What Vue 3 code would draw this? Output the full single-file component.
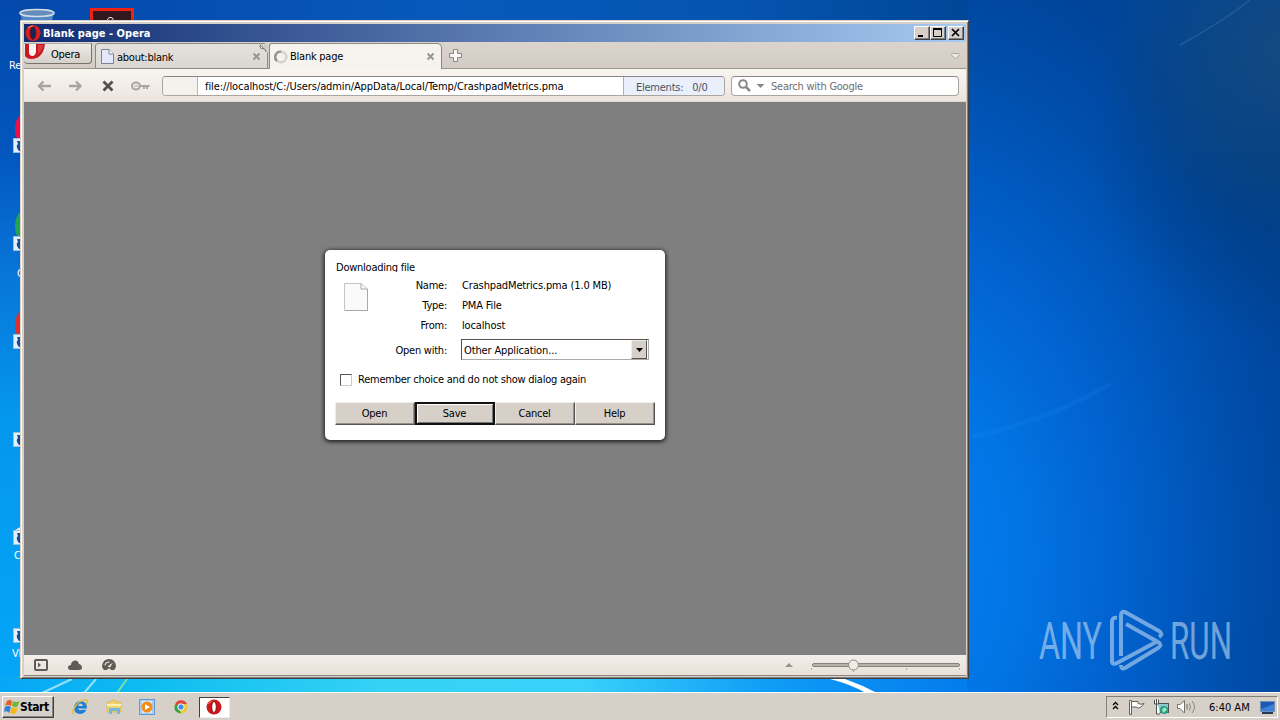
<template>
  <div class="desktop">
    <svg class="wallpaper" width="1280" height="720" viewBox="0 0 1280 720">
      <defs>
        <linearGradient id="sky" x1="0" y1="0" x2="0" y2="1">
          <stop offset="0" stop-color="#0349ab" />
          <stop offset=".2" stop-color="#0355bd" />
          <stop offset=".4" stop-color="#0779dc" />
          <stop offset=".58" stop-color="#0497ee" />
          <stop offset="1" stop-color="#04a8fa" />
        </linearGradient>
        <linearGradient id="strip" x1="0" y1="0" x2="1" y2="0">
          <stop offset="0" stop-color="#08a6f6" />
          <stop offset=".12" stop-color="#0fbdf0" />
          <stop offset=".3" stop-color="#35d2f4" />
          <stop offset=".45" stop-color="#3ad2fa" />
          <stop offset=".6" stop-color="#0f9df6" />
          <stop offset=".75" stop-color="#037cec" />
        </linearGradient>
        <radialGradient id="right" gradientUnits="userSpaceOnUse" cx="900" cy="560" r="620" gradientTransform="translate(900 560) scale(.68 1) translate(-900 -560)">
          <stop offset="0" stop-color="#037fee" />
          <stop offset=".28" stop-color="#0275e5" />
          <stop offset=".55" stop-color="#0160cc" />
          <stop offset=".8" stop-color="#004fad" />
          <stop offset="1" stop-color="#00449a" />
        </radialGradient>
        <radialGradient id="corner" gradientUnits="userSpaceOnUse" cx="1290" cy="50" r="190">
          <stop offset="0" stop-color="#134a80" />
          <stop offset="1" stop-color="#134a80" stop-opacity="0" />
        </radialGradient>
        <radialGradient id="shade" gradientUnits="userSpaceOnUse" cx="1290" cy="145" r="200">
          <stop offset="0" stop-color="#003c80" />
          <stop offset="1" stop-color="#003c80" stop-opacity="0" />
        </radialGradient>
        <linearGradient id="top" x1="0" y1="0" x2="1" y2="0">
          <stop offset="0" stop-color="#0448aa" />
          <stop offset=".45" stop-color="#0759bb" />
          <stop offset=".75" stop-color="#0554b0" />
          <stop offset="1" stop-color="#004797" />
        </linearGradient>
      </defs>
      <rect width="40" height="720" fill="url(#sky)" />
      <rect x="20" width="949" height="24" fill="url(#top)" />
      <rect y="676" width="1280" height="20" fill="url(#strip)" />
      <rect x="967" width="313" height="693" fill="url(#right)" />
      <rect x="967" width="313" height="693" fill="url(#shade)" />
      <rect x="967" width="313" height="400" fill="url(#corner)" />
      <path d="M1180 45Q1225 20 1250 0" stroke="#4b83b8" stroke-width="1.5" opacity=".35" fill="none" />
      <path d="M972 437Q1050 420 1110 384" stroke="#2d9cf6" stroke-width="5" opacity=".12" fill="none" />
      <path d="M42 693L72 679M84 693L96 679" stroke="#b9ecfb" stroke-width="2" opacity=".8" />
      <path d="M117 693L127 679" stroke="#7de0a0" stroke-width="2" />
      <path d="M830 679H845Q862 685 877 693H866Q850 684 830 679Z" fill="#fff" />

      <!-- recycle bin and reader shortcut behind the window -->
      <path d="M20 12L24 30H50L54 12Z" fill="#5288c8" />
      <ellipse cx="37" cy="13" rx="17" ry="3.5" fill="#648dbd" stroke="#d4dce4" stroke-width="1.6" />
      <rect x="91.500" y="9.500" width="41" height="20" fill="#32181c" stroke="#ef2314" stroke-width="3" />
      <path d="M108 24Q106 17 111 17.500Q115 18 111 24" stroke="#eee" fill="none" />
      <ellipse cx="27" cy="129" rx="12" ry="17" fill="#ef0d4b" />
      <ellipse cx="27" cy="226" rx="12" ry="17" fill="#24a451" />
      <ellipse cx="27" cy="325" rx="12" ry="17" fill="#dd3131" />
      <path d="M15 530L22 526V531Z" fill="#e6f0e4" />
      <g v-for="y in shortcutArrows" :key="y" :transform="`translate(13 ${y})`">
        <rect x=".5" y=".5" width="14" height="14" fill="#e3effa" stroke="#9abede" />
        <path d="M6 13Q2 8 5 6L4 3H12V9L9 7Q7 9 9 13Z" fill="#174b91" />
      </g>
      <g class="label">
        <text x="9" y="69">Re</text>
        <text x="17" y="277">G</text>
        <text x="14" y="559">C</text>
        <text x="12" y="657">VL</text>
      </g>

      <g class="brand" opacity=".55">
        <text x="1039" y="659" textLength="63" lengthAdjust="spacingAndGlyphs">ANY</text>
        <text x="1170" y="659" textLength="62" lengthAdjust="spacingAndGlyphs">RUN</text>
        <g fill="none" stroke="#cfe4f7" stroke-width="4" stroke-linejoin="round">
          <path d="M1117 618Q1112 617 1112 622V662Q1113 665 1117 663L1158 641" />
          <path d="M1159 637Q1164 634 1159 631L1125 612Q1121 611 1121 616V656" />
          <path d="M1126 624L1158 642Q1163 645 1158 648L1125 668Q1121 670 1121 665" />
        </g>
      </g>
    </svg>

    <main class="window">
      <header class="titlebar">
        <svg class="logo" width="16" height="16" viewBox="0 0 16 16">
          <ellipse cx="8" cy="8" rx="7.500" ry="8" fill="#d9201e" />
          <ellipse cx="8" cy="8" rx="3" ry="6.500" fill="#142659" stroke="#8c1010" />
          <path d="M3 3Q5 1 8 1" stroke="#ff9484" fill="none" />
        </svg>
        <strong>Blank page - Opera</strong>
        <div class="controls">
          <i><svg width="14" height="12"><path d="M3 9H8" stroke="#000" stroke-width="2" /></svg></i>
          <i><svg width="14" height="12"><path d="M2.500 2V9.500H10.500V2M2 2H11" fill="none" stroke="#000" /><path d="M2 2H11" stroke="#000" stroke-width="2" /></svg></i>
          <i class="close"><svg width="14" height="12"><path d="M3 2L10 9M10 2L3 9" stroke="#000" stroke-width="1.700" /></svg></i>
        </div>
      </header>

      <nav class="tabbar">
        <div class="menu">
          <svg width="21" height="16" viewBox="0 0 21 16">
            <path d="M1 0H21Q19 15 7 15Q3 15 1 12Z" fill="#c91820" />
            <path d="M5 0H12V8Q11 12 8.500 12Q5 12 5 8Z" fill="#f8f4f1" />
            <path d="M14 1H19Q18 7 14 10Z" fill="#e2565a" opacity=".6" />
          </svg>
          <span>Opera</span>
        </div>
        <div class="tab first">
          <svg width="13" height="15" viewBox="0 0 13 15">
            <path d="M.5.500H8L12.500 5V14.500H.500Z" fill="#e3e9f8" stroke="#7b8294" />
            <path d="M8 .5V5H12.500" fill="#fff" stroke="#7b8294" />
          </svg>
          <span>about:blank</span>
          <svg class="x" width="9" height="9"><path d="M1.500 1.500L7.500 7.500M7.500 1.500L1.500 7.500" stroke="#999691" stroke-width="2" /></svg>
          <svg class="fold" width="9" height="9"><path d="M0 0H9V9Z" fill="#d4cdc4" /><path d="M1 1Q1 6 4 4.500Q7 5 7 8M1 1L7 7" fill="#fff" stroke="#77746e" /></svg>
        </div>
        <div class="tab active">
          <svg class="spin" width="14" height="14"><circle cx="7" cy="7" r="5.300" fill="none" stroke="#d3d1ce" stroke-width="2.400" /><path d="M3 11A5.300 5.300 0 0 1 7 1.700" fill="none" stroke="#96948f" stroke-width="2.400" /></svg>
          <span>Blank page</span>
          <svg class="x" width="9" height="9"><path d="M1.500 1.500L7.500 7.500M7.500 1.500L1.500 7.500" stroke="#999691" stroke-width="2" /></svg>
        </div>
        <svg class="plus" width="13" height="13"><path d="M4.500.5H8.500V4.500H12.500V8.500H8.500V12.500H4.500V8.500H.500V4.500H4.500Z" fill="#f8f7f5" stroke="#89847e" /></svg>
        <svg class="trash" width="9" height="7"><path d="M.5 1.500Q.5.500 1.500.500H7.500Q9 1 8 2.500L4.500 6L1 2.500Z" fill="#eee9e3" stroke="#aaa49d" /></svg>
      </nav>

      <section class="toolbar">
        <svg class="nav-icons" width="130" height="20" viewBox="0 0 130 20">
          <g fill="none" stroke="#a9a49f" stroke-width="2.400">
            <path d="M9.500 5.500L5 10L9.500 14.500M5.500 10H17" />
            <path d="M42 5.500L46.500 10L42 14.500M46 10H35" />
          </g>
          <path d="M69.500 5.500L78.500 14.500M78.500 5.500L69.500 14.500" stroke="#53504c" stroke-width="2.800" />
          <g fill="none" stroke="#aaa59f" stroke-width="2">
            <ellipse cx="102" cy="10" rx="4" ry="3.400" />
            <path d="M100 10H115" stroke-width="1" />
            <path d="M107 10H115.500M110 11V13M113 11V13" stroke-width="2" />
          </g>
        </svg>
        <div class="address">
          <span class="badge"></span>
          <span class="url">file://localhost/C:/Users/admin/AppData/Local/Temp/CrashpadMetrics.pma</span>
          <span class="elements"><span>Elements:</span><span>0/0</span></span>
        </div>
        <div class="search">
          <svg width="28" height="14"><circle cx="5" cy="5" r="3.800" fill="none" stroke="#8b8986" stroke-width="2" /><path d="M8 8L12 12" stroke="#8b8986" stroke-width="2.500" /><path d="M18.500 5H26.500L22.500 9Z" fill="#8b8986" /></svg>
          <span>Search with Google</span>
        </div>
      </section>

      <section class="page">
        <div class="dialog">
          <h1>Downloading file</h1>
          <div class="details">
            <svg class="file" width="24" height="28" viewBox="0 0 24 28">
              <path d="M.5.500H17L23.500 6V27.500H.500Z" fill="#fafafa" stroke="#c5c5c5" />
              <path d="M17 .5V6H23.500M1 27.500H23.500V6" fill="none" stroke="#a9a9a9" />
            </svg>
            <dl>
              <template v-for="row in details" :key="row.label">
                <dt>{{ row.label }}</dt>
                <dd>{{ row.value }}</dd>
              </template>
              <dt class="with">Open with:</dt>
              <dd class="combo"><span>Other Application...</span><i><svg width="7" height="4"><path d="M0 0H7L3.500 4Z" /></svg></i></dd>
            </dl>
          </div>
          <label class="remember"><span class="box"></span><span>Remember choice and do not show dialog again</span></label>
          <div class="buttons">
            <button v-for="b in buttons" :key="b" type="button" :class="{ main: b === 'Save' }">{{ b }}</button>
          </div>
        </div>
      </section>

      <footer class="status">
        <svg width="86" height="14" viewBox="0 0 86 14">
          <rect x="1" y="2" width="12" height="10" rx="1" fill="none" stroke="#5f5b56" stroke-width="2" />
          <path d="M4 4.500L7 7L4 9.500Z" fill="#5f5b56" />
          <path d="M37 12Q34 12 34 9.500Q34 7 37 7Q37 3 41 2.500Q44 2 45 6Q48 7 48 9.500Q48 12 45 12Z" fill="#5f5b56" />
          <path d="M70 12Q68 10 68 8Q69 1 75 1Q81 1 82 8Q82 10 80 12H77Q77 10.500 75 10.500Q73 10.500 73 12Z" fill="#5f5b56" />
          <path d="M71 7.500Q71.500 4 75.500 4" stroke="#eee8e1" fill="none" stroke-width="1.200" />
          <path d="M73.500 8.500L79 4.500L76 9.500Z" fill="#eee8e1" />
        </svg>
        <svg class="zoom" width="176" height="16" viewBox="0 0 176 16">
          <path d="M1 10L5 6L9 10Z" fill="#9b9289" />
          <rect x="28.500" y="6.500" width="147" height="3" rx="1.500" fill="#b9b0a9" stroke="#8a817a" />
          <path d="M27.500 11V13M122.500 11V13M175.500 11V13M69.500 12V15" stroke="#b2a9a0" />
          <circle cx="69.500" cy="8" r="5" fill="#eeeae6" stroke="#918982" />
        </svg>
      </footer>
    </main>

    <footer class="taskbar">
      <div class="start">
        <svg width="16" height="16" viewBox="0 0 16 16">
          <path d="M3 2Q6 0 8 2L7 7Q4 5 1 7Z" fill="#ee5b24" />
          <path d="M9 2Q12 4 15.500 2L13.500 7.500Q11 9 8 7Z" fill="#71b832" />
          <path d="M1 8Q4 6 7 8L5 14Q3 11 0 13Z" fill="#2e83d2" />
          <path d="M8 8Q10 10 13.500 8.500L12 14Q9 16 6 14Z" fill="#f7b717" />
        </svg>
        <strong>Start</strong>
      </div>
      <div class="quick">
        <svg width="18" height="16" viewBox="0 0 18 16">
          <path d="M16 9.500H7Q8 12 11 10.800H15.500Q13 15 9 15Q3 14.500 3 8.500Q4 2 9.500 2Q16.500 2.500 16 9.500ZM7 7H12Q11.500 4.500 9.500 4.500Q7.500 5 7 7Z" fill="#1b7fd6" />
          <path d="M3 15Q0 14 4.500 7Q10 0 15.500 1Q18 3 15 5.500" fill="none" stroke="#eabb26" stroke-width="1.400" />
        </svg>
        <svg width="18" height="16" viewBox="0 0 18 16">
          <path d="M2 3H6L7 1H10V3H16V13H2Z" fill="#f1d36d" stroke="#d3ab42" stroke-width=".6" />
          <path d="M2 6H16" stroke="#fff2b0" stroke-width="2" />
          <path d="M4 15V9H15V15H12V12H7V15Z" fill="#71b8df" />
        </svg>
        <svg width="18" height="16" viewBox="0 0 18 16">
          <rect x="1.500" y=".5" width="15" height="15" fill="#a9cdf2" stroke="#5d9ad7" />
          <rect x="4" y="2" width="10" height="12" fill="#d7e8f7" />
          <circle cx="9" cy="8" r="5.500" fill="#f18b19" /><path d="M7 5L12 8L7 11Z" fill="#fff" />
        </svg>
        <svg width="18" height="16" viewBox="0 0 18 16">
          <circle cx="9" cy="8" r="6.500" fill="#efc82d" /><path d="M3.500 4.500A6.500 6.500 0 0 1 15 5H9L6 10Z" fill="#df4639" />
          <path d="M3.500 4.500L7.500 10.500L9 14.500Q0 13 3.500 4.500Z" fill="#32a350" /><circle cx="9" cy="8" r="3.200" fill="#448ce0" stroke="#fff" />
        </svg>
      </div>
      <div class="running">
        <svg width="16" height="16" viewBox="0 0 16 16">
          <circle cx="8" cy="8" r="7.500" fill="#cd171a" /><ellipse cx="8" cy="8" rx="2.300" ry="5.500" fill="#fff" stroke="#861012" />
          <path d="M2.500 5Q4 2 6 2" stroke="#f58479" fill="none" />
        </svg>
      </div>
      <div class="tray">
        <svg width="76" height="18" viewBox="0 0 76 18">
          <path d="M1 7L3.500 4.500L6 7M1 11L3.500 8.500L6 11" fill="none" stroke="#000" stroke-width="1.300" />
          <g transform="translate(17 1)" fill="#fff" stroke="#64615d"><path d="M.5 1.500H2.500V15.500H.500Z" /><path d="M2.500 2.500H9V4.500Q12 6 15 4.500Q13 8 10 9Q8 9 7 8H2.500Z" /></g>
          <g transform="translate(41 1)">
            <rect x="4.500" y="4.500" width="11" height="9" fill="#8cc9cd" stroke="#4a5054" />
            <circle cx="11" cy="11" r="4" fill="#1b9c83" /><path d="M9 10L12 8L14 11L10 14Z" fill="#a3e5ba" />
            <path d="M1.500 1V5H5.500V1M3.500 0V15H7" fill="#fff" stroke="#4c504d" />
          </g>
          <g fill="#fff" stroke="#74716d" transform="translate(65 1)"><path d="M.5 5.500V9.500H3L7.500 14V1.500L3 5.500Z" /><path d="M10 5V10.500" fill="none" /></g>
        </svg>
        <svg class="waves" width="8" height="18"><path d="M0 5Q3 9 0 13M3 3Q8 9 3 15" fill="none" stroke="#898580" /></svg>
        <span class="clock">6:40 AM</span>
        <svg width="15" height="13"><rect x=".5" y=".5" width="14" height="10" fill="#1e58b7" stroke="#738fb9" /><path d="M1 8L14 3V10H1Z" fill="#3e82d5" /><path d="M2 12H13" stroke="#253856" stroke-width="2" /></svg>
      </div>
    </footer>
  </div>
</template>

<script setup>
const shortcutArrows = [138, 236, 334, 432, 530, 628];

const details = [
  { label: "Name:", value: "CrashpadMetrics.pma (1.0 MB)" },
  { label: "Type:", value: "PMA File" },
  { label: "From:", value: "localhost" },
];

const buttons = ["Open", "Save", "Cancel", "Help"];
</script>

<style>
body {
  margin: 0;
}
</style>

<style scoped>
* {
  box-sizing: border-box;
}

.desktop {
  position: relative;
  width: 1280px;
  height: 720px;
  overflow: hidden;
  font-family: "DejaVu Sans Condensed", "DejaVu Sans", sans-serif;
  font-size: 11px;
  font-stretch: condensed;
  letter-spacing: -0.24px;
  line-height: 14px;
  color: #000;
  display: flex;
  flex-direction: column;
  justify-content: flex-end;
}

svg {
  display: block;
  flex: none;
}

i {
  font-style: normal;
}

.wallpaper {
  position: absolute;
  inset: 0;
}

.label {
  fill: #fff;
}

.brand {
  font: 51px Roboto, sans-serif;
  letter-spacing: 0;
  fill: #cfe4f7;
}

.window {
  position: absolute;
  left: 20px;
  top: 20px;
  width: 949px;
  height: 659px;
  padding: 3px 2px 2px 3px;
  background: #d6d0c9;
  border: 1px solid #d6d0c9;
  border-right-color: #404040;
  border-bottom-color: #404040;
  box-shadow: inset 1px 1px #fff, inset -1px -1px #808080;
  display: flex;
  flex-direction: column;
}

.titlebar {
  height: 18px;
  flex: none;
  display: flex;
  align-items: center;
  padding: 0 2px 0 1px;
  color: #fff;
  background: linear-gradient(90deg, #102d72, #a6caf0);
}

.titlebar strong {
  margin: 1px 0 0 2px;
  letter-spacing: 0.03px;
}

.controls {
  display: flex;
  margin-left: auto;
}

.controls i {
  width: 16px;
  height: 14px;
  background: #d6d0c9;
  border: 1px solid;
  border-color: #fff #404040 #404040 #fff;
  box-shadow: inset -1px -1px #808080;
}

.controls .close {
  margin-left: 2px;
}

.tabbar {
  height: 27px;
  padding-top: 1px;
  flex: none;
  display: flex;
  align-items: flex-start;
  background: linear-gradient(#dad4cd, #d2ccc4);
  box-shadow: inset 0 -1px #98958d;
}

.menu {
  width: 68px;
  height: 21px;
  display: flex;
  border: 1px solid #77736c;
  border-top-color: #aaa;
  border-left: 0;
  border-radius: 0 0 4px 4px;
  background: linear-gradient(#eeebe7, #d5d0c9);
}

.menu span {
  margin: 4px 0 0 6px;
}

.tab {
  height: 26px;
  width: 173px;
  margin-left: 3px;
  display: flex;
  align-items: center;
  position: relative;
  padding: 1px 6px 0 5px;
  border: 1px solid #8c8983;
  border-radius: 3px 5px 0 0;
  background: linear-gradient(#e5e2de, #dad6d1);
}

.tab span {
  margin: 2px 0 0 3px;
}

.tab.active {
  margin-left: 1px;
  padding: 0 6px 0 4px;
  border-bottom: 0;
  background: #f6f3ef;
}

.tab.active span {
  margin: 1px 0 0 2px;
}

.x {
  margin-left: auto;
}

.fold {
  position: absolute;
  top: 0;
  right: -1px;
}

.plus {
  margin: 6px 0 0 7px;
}

.trash {
  margin: 10px 6px 0 auto;
}

.toolbar {
  height: 33px;
  flex: none;
  display: flex;
  align-items: center;
  padding: 1px 7px 0 10px;
  background: linear-gradient(#f8f5f1, #ece5df);
  border-bottom: 1px solid #ddd8d1;
}

.address {
  width: 563px;
  height: 20px;
  margin: 0 6px 0 -2px;
  display: flex;
  overflow: hidden;
  border: 1px solid #aaa59f;
  border-top-color: #888;
  border-radius: 4px;
  background: #fff;
}

.badge {
  width: 35px;
  background: #f5f1ed;
  border-right: 1px solid #bcb8b3;
}

.url {
  flex: 1;
  padding: 3px 0 0 7px;
  white-space: nowrap;
  letter-spacing: -0.09px;
}

.elements {
  width: 101px;
  padding: 4px 0 0 12px;
  display: flex;
  gap: 9px;
  color: #4d5262;
  background: #e9effb;
  border-left: 1px solid #a7b2c5;
}

.search {
  width: 228px;
  height: 20px;
  display: flex;
  align-items: center;
  padding-left: 6px;
  color: #706d6a;
  background: #fff;
  border: 1px solid #aaa59f;
  border-top-color: #888;
  border-radius: 4px;
}

.search span {
  margin: 2px 0 0 5px;
}

.page {
  flex: 1;
  display: flex;
  justify-content: center;
  align-items: flex-start;
  background: #7f7f7f;
  padding-top: 148px;
}

.dialog {
  width: 340px;
  height: 190px;
  padding: 11px 10px 0;
  display: flex;
  flex-direction: column;
  border-radius: 5px;
  background: #fff;
  box-shadow: 0 1px 4px 1px rgba(0, 0, 0, 0.75);
}

h1 {
  margin: 0 0 0 1px;
  height: 11px;
  overflow: hidden;
  font: inherit;
}

.details {
  display: flex;
  margin-top: 4px;
}

.file {
  margin: 7px 0 0 9px;
}

dl {
  margin: 0 0 0 11px;
  display: grid;
  grid-template-columns: 68px 187px;
  column-gap: 15px;
  grid-template-rows: 20px 20px 20px 24px;
  align-items: center;
}

dt {
  text-align: right;
}

dd {
  margin: 0;
  letter-spacing: -0.14px;
}

dt.with {
  padding-top: 5px;
}

.combo {
  height: 21px;
  margin: 3px 0 0 -1px;
  padding: 0 1px 0 2px;
  display: flex;
  align-items: center;
  justify-content: space-between;
  border: 1px solid #55534f;
  border-right-color: #aaa;
  border-bottom-color: #aaa;
}

.combo span {
  padding-top: 2px;
}

.combo i {
  width: 16px;
  height: 19px;
  display: flex;
  align-items: center;
  justify-content: center;
  background: #d6d0c9;
  border: 1px solid;
  border-color: #eee #555 #555 #eee;
}

.remember {
  display: flex;
  margin: 13px 0 0 5px;
  align-items: center;
}

.box {
  width: 12px;
  height: 12px;
  margin: -1px 6px 0 0;
  border: 1px solid;
  border-color: #555 #ccc #ccc #555;
}

.buttons {
  display: flex;
  margin-top: 15px;
}

button {
  width: 80px;
  height: 23px;
  padding: 1px 1px 0 0;
  font: inherit;
  letter-spacing: inherit;
  color: #000;
  background: #d6d0c9;
  border: 1px solid;
  border-color: #eee #555 #555 #eee;
  border-radius: 0;
  box-shadow: inset -1px -1px #969089;
}

button.main {
  border: 2px solid #111;
  box-shadow: inset 1px 1px #fff, inset -1px -1px #777;
}

.status {
  height: 21px;
  flex: none;
  display: flex;
  align-items: center;
  padding: 0 6px 0 10px;
  background: linear-gradient(#f2eee9, #e7e1d8);
  border-bottom: 1px solid #8b8780;
}

.zoom {
  margin-left: auto;
}

.taskbar {
  position: relative;
  height: 28px;
  flex: none;
  display: flex;
  align-items: center;
  padding: 1px 2px 0;
  background: #d6d0c9;
  border-top: 1px solid #fff;
}

.start {
  width: 52px;
  height: 22px;
  display: flex;
  align-items: center;
  padding-left: 1px;
  border: 1px solid;
  border-color: #fff #404040 #404040 #fff;
  box-shadow: inset -1px -1px #888;
}

.start strong {
  font-size: 12px;
  letter-spacing: -0.4px;
}

.quick {
  display: flex;
  gap: 15.500px;
  margin-left: 17px;
}

.running {
  width: 31px;
  height: 21px;
  margin-left: 9px;
  display: flex;
  align-items: center;
  justify-content: center;
  background: #fff;
  border: 1px solid;
  border-color: #404040 #eee #eee #404040;
}

.tray {
  width: 172px;
  height: 22px;
  margin-left: auto;
  display: flex;
  align-items: center;
  padding: 0 2px 0 5px;
  border: 1px solid;
  border-color: #827e79 #fff #fff #827e79;
}

.waves {
  margin-left: 1px;
}

.clock {
  width: 42px;
  margin: 1px 10px 0 12px;
  white-space: nowrap;
  letter-spacing: 0;
}
</style>
